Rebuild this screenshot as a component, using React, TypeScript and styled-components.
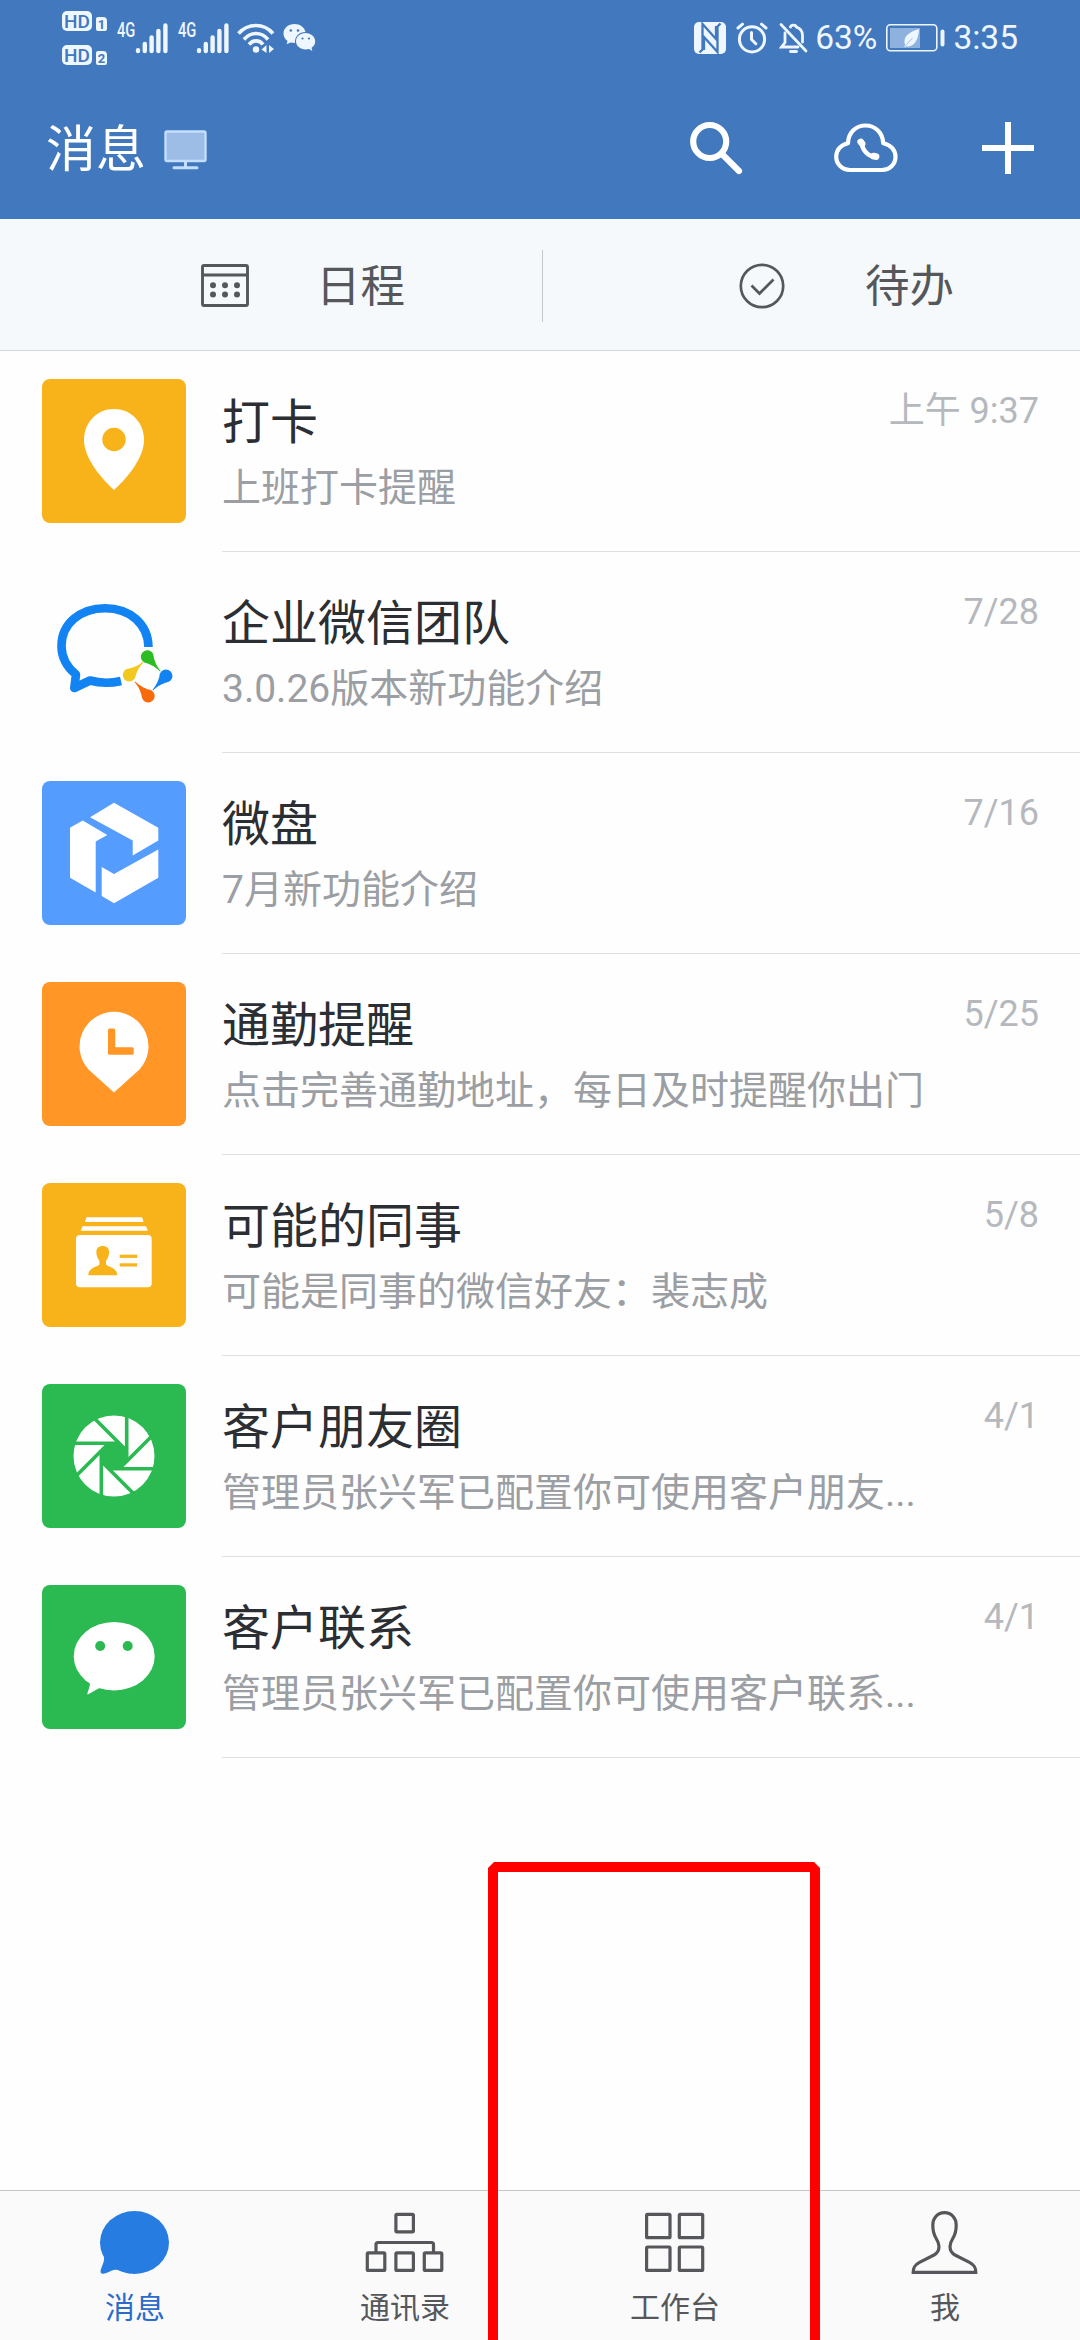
import React from "react";
import styled, { createGlobalStyle } from "styled-components";

const BLUE = "#4278be";
const INK = "#55575b";

const GlobalStyle = createGlobalStyle`
  body {
    margin: 0;
    background: #fff;
    font-family: Roboto, "Noto Sans CJK SC", sans-serif;
  }
  svg { display: block; flex: none; }
`;

const Screen = styled.div`
  position: relative;
  display: flex;
  flex-direction: column;
  width: 1080px;
  height: 2340px;
  overflow: hidden;
  background: #fefefe;
`;

/* ---------- status bar ---------- */

const StatusBar = styled.div`
  display: flex;
  justify-content: space-between;
  height: 76px;
  padding: 0 62px;
  box-sizing: border-box;
  background: ${BLUE};
  color: #eef6ff;
`;

const StatusGroup = styled.div`
  display: flex;
  align-items: center;
`;

const HdColumn = styled.div`
  display: flex;
  flex-direction: column;
  gap: 14px;
`;

const HdLine = styled.div`
  display: flex;
  align-items: flex-end;
  gap: 4px;
  height: 20px;
`;

const HdBadge = styled.span`
  width: 30px;
  height: 20px;
  border-radius: 5px;
  background: #eef6ff;
  color: ${BLUE};
  font-size: 19px;
  font-weight: 500;
  line-height: 21px;
  text-align: center;
`;

const SimBadge = styled.span`
  width: 11px;
  height: 14px;
  border-radius: 2px 4px 2px 2px;
  background: #eef6ff;
  color: ${BLUE};
  font-size: 13px;
  font-weight: 700;
  line-height: 15px;
  text-align: center;
`;

const Signal = styled.div<{ $gap: number }>`
  display: flex;
  align-items: flex-start;
  margin-left: ${(p) => p.$gap}px;
`;

const Generation = styled.span`
  width: 18px;
  font-size: 21px;
  font-weight: 500;
  line-height: 17px;
  transform: scaleX(0.7);
  transform-origin: left;
`;

const StatusIcon = styled.span<{ $gap: number }>`
  margin-left: ${(p) => p.$gap}px;
`;

const StatusText = styled.span<{ $gap: number }>`
  margin-left: ${(p) => p.$gap}px;
  font-size: 33.5px;
  line-height: 40px;
`;

/* ---------- title bar ---------- */

const TitleBar = styled.header`
  display: flex;
  align-items: center;
  justify-content: space-between;
  height: 143px;
  padding: 0 46px 0 46px;
  box-sizing: border-box;
  background: ${BLUE};
  color: #fff;
`;

const TitleGroup = styled.div`
  display: flex;
  align-items: center;
  gap: 18px;
  padding-top: 4px;
`;

const Title = styled.h1`
  margin: 0;
  font-size: 50px;
  font-weight: 400;
  line-height: 60px;
`;

const Actions = styled.div`
  display: flex;
  align-items: center;
  gap: 84px;
`;

const SearchButton = styled.span`
  margin-right: 7px;
`;

/* ---------- shortcuts ---------- */

const Shortcuts = styled.div`
  display: flex;
  align-items: center;
  height: 132px;
  padding-top: 2px;
  box-sizing: border-box;
  border-bottom: 1px solid #d3dade;
  background: #f5f9fc;
  color: ${INK};
`;

const Shortcut = styled.div<{ $pad: number; $gap: number }>`
  display: flex;
  flex: 1;
  align-items: center;
  gap: ${(p) => p.$gap}px;
  padding-left: ${(p) => p.$pad}px;
  font-size: 44.5px;
  line-height: 60px;
`;

const ShortcutLabel = styled.span`
  padding-top: 2px;
`;

const Divider = styled.div`
  width: 1px;
  height: 72px;
  background: #c3c8cc;
`;

/* ---------- conversations ---------- */

const List = styled.main`
  flex: 1;
`;

const Row = styled.article`
  display: flex;
  height: 201px;
  padding-left: 42px;
  box-sizing: border-box;
`;

const Avatar = styled.div<{ $bg: string }>`
  width: 144px;
  height: 144px;
  margin: 28px 36px 0 0;
  flex: none;
  border-radius: 8px;
  background: ${(p) => p.$bg};
`;

const Body = styled.div`
  display: flex;
  flex: 1;
  justify-content: space-between;
  padding: 42px 41px 0 0;
  border-bottom: 1px solid #dfe0e2;
`;

const Texts = styled.div`
  display: flex;
  flex-direction: column;
`;

const Name = styled.h2`
  margin: 0;
  color: #2b2e33;
  font-size: 48px;
  font-weight: 400;
  line-height: 60px;
  white-space: nowrap;
`;

const Preview = styled.p`
  margin: 10px 0 0;
  color: #9b9ea3;
  font-size: 39px;
  font-weight: 400;
  line-height: 50px;
  white-space: nowrap;
`;

const Time = styled.time`
  margin-top: -3px;
  height: 42px;
  color: #b5b8bd;
  font-size: 36px;
  line-height: 42px;
  white-space: nowrap;
`;

/* ---------- bottom navigation ---------- */

const Nav = styled.nav`
  display: flex;
  height: 150px;
  box-sizing: border-box;
  border-top: 1px solid #c6c6c6;
  background: #fafafa;
`;

const NavItem = styled.div<{ $active?: boolean }>`
  display: flex;
  flex: 1;
  flex-direction: column;
  align-items: center;
  padding-top: 18px;
  color: ${(p) => (p.$active ? "#2a6bcb" : INK)};
  font-size: 30px;
  line-height: 40px;
`;

const NavLabel = styled.span`
  margin-top: 13px;
`;

/* Red marker drawn over the workbench tab, running off the bottom edge. */
const Marker = styled.div`
  position: absolute;
  left: 488px;
  top: 1862px;
  width: 332px;
  height: 490px;
  box-sizing: border-box;
  border: 10px solid #ff0000;
  clip-path: polygon(6px 0, 326px 0, 100% 6px, 100% 100%, 0 100%, 0 6px);
`;

/* ---------- icons ---------- */

const SignalBars = () => (
  <svg width="34" height="32" viewBox="0 0 34 32" stroke="currentColor" strokeWidth="4.4" strokeLinecap="round">
    <path d="M3 28.2V29M9.8 22V29M16.6 15.5V29M23.4 9V29M30.4 3.5V29" />
  </svg>
);

const WifiIcon = () => (
  <svg width="38" height="32" viewBox="0 0 38 32" fill="none" stroke="currentColor" strokeWidth="3.6">
    <path d="M1.5 11.5C11 .8 27 .8 36 11.5M7 17.5C13.5 9.5 24.5 9.5 31 17.5M12 22.5C16 17.6 22.4 17.6 26 22.5" />
    <circle cx="19" cy="27.5" r="3.2" fill="currentColor" stroke="none" />
    <path d="M29.5 23V31L24.5 27.5ZM32 23V31L37 27Z" fill="currentColor" stroke="none" />
  </svg>
);

const WechatStatusIcon = () => (
  <svg width="33" height="30" viewBox="0 0 33 30" fill="currentColor">
    <path d="M11.5 1C5.200 1 .5 5.200 .5 10.500C.5 13.600 2 16 4.500 17.900L3.600 21.300L7.500 19.400L12 20.100C11.500 13.500 16 9 22.500 9C21.500 4.300 17 1 11.500 1Z" />
    <path d="M22.500 10C17 10 13 13.800 13 18.300C13 23 17.300 26.500 22.500 26.500L26 26L29.300 28L28.600 24.800C31 23.200 32.200 21 32.200 18.300C32.200 13.800 28 10 22.500 10Z" />
    <g fill={BLUE}>
      <circle cx="7.800" cy="7.500" r="1.300" />
      <circle cx="15" cy="7.500" r="1.300" />
      <circle cx="19.500" cy="15.500" r="1.100" />
      <circle cx="26" cy="15.500" r="1.100" />
    </g>
  </svg>
);

const NfcIcon = () => (
  <svg width="32" height="32" viewBox="0 0 32 32">
    <rect width="32" height="32" rx="5" fill="currentColor" />
    <path
      d="M5.500 30.500L8.500 27.500V2L22 17V4M26.500 1.500L23.500 4.500V30L10 15V28"
      fill="none"
      stroke={BLUE}
      strokeWidth="2.300"
    />
  </svg>
);

const AlarmIcon = () => (
  <svg width="32" height="32" viewBox="0 0 32 32" fill="none" stroke="currentColor" strokeWidth="3" strokeLinecap="round">
    <circle cx="16" cy="17.300" r="12.600" />
    <path d="M2 6L6.500 2.200M25.500 2.200L30 6M15.500 10.500V17.500L19.800 21.800" />
  </svg>
);

const BellOffIcon = () => (
  <svg width="29" height="32" viewBox="0 0 29 32" fill="none" stroke="currentColor" strokeWidth="2.800" strokeLinecap="round">
    <path d="M2 2.500L27 29" />
    <path d="M11.500 5C12.200 2.500 16.800 2.500 17.500 5.200C21.500 6.500 23.500 9.500 23.500 13.500V20M6 11V20.500L2.500 25H19" />
    <path d="M11.500 29.500H17.500" />
  </svg>
);

const BatteryIcon = () => (
  <svg width="59" height="28" viewBox="0 0 59 28">
    <rect x=".8" y=".8" width="50" height="26" rx="3.500" fill="none" stroke="currentColor" strokeWidth="1.600" />
    <rect x="4" y="4" width="30" height="20" fill="#8fb1de" />
    <rect x="54.500" y="5.500" width="4" height="17" rx="2" fill="currentColor" />
    <path d="M33 5C25 7.500 19 11 18.500 16.500C18.400 18.500 18.800 20 19.200 21L18 23.500L20 22.300C27 23.500 32.500 17.500 33 5Z" fill="currentColor" />
    <path d="M19.500 21.500L26.500 14" stroke="#8fb1de" strokeWidth=".8" />
  </svg>
);

const MonitorIcon = () => (
  <svg width="43" height="40" viewBox="0 0 43 40" fill="none" stroke="#c3deff">
    <rect x="1.500" y="1.500" width="40" height="29.500" rx="1.500" fill="#9dbce6" strokeWidth="2.400" />
    <path d="M21.500 31V37M10 37.700H33" strokeWidth="3" strokeLinecap="round" />
  </svg>
);

const SearchIcon = () => (
  <svg width="54" height="54" viewBox="0 0 54 54" fill="none" stroke="currentColor">
    <circle cx="20.700" cy="20.500" r="16.500" strokeWidth="6.200" />
    <path d="M33 33L50 50" strokeWidth="6.200" strokeLinecap="round" />
  </svg>
);

const CloudCallIcon = () => (
  <svg width="64" height="50" viewBox="0 0 64 50" fill="none" stroke="currentColor" strokeWidth="4.200">
    <path d="M16 47C8 47 2.200 41 2.200 33.800C2.200 27 7 21.500 14 20.200C14.200 10 21.500 2.500 31.500 2.500C41.500 2.500 48.800 10 49.200 20.200C56.500 21.500 61.500 27 61.500 33.800C61.500 41 56 47 48 47Z" strokeLinejoin="round" />
    <path d="M27.500 18C28 27 33.500 33.500 43 34.500" strokeWidth="4.600" />
    <path d="M26.800 19L28 20.500M39.800 33.200L42 33.500" strokeWidth="6.800" strokeLinecap="round" />
  </svg>
);

const PlusIcon = () => (
  <svg width="52" height="52" viewBox="0 0 52 52" stroke="currentColor" strokeWidth="6">
    <path d="M26 0V52M0 26H52" />
  </svg>
);

const CalendarIcon = () => (
  <svg width="48" height="43" viewBox="0 0 48 43" fill="none" stroke="currentColor">
    <rect x="1.500" y="1.500" width="45" height="40" rx="1.500" strokeWidth="2.900" />
    <path d="M1.500 11H46.500" strokeWidth="2.900" />
    <g fill="currentColor" stroke="none">
      {[12, 24, 36].map((x) => (
        <React.Fragment key={x}>
          <circle cx={x} cy="21.300" r="3" />
          <circle cx={x} cy="30.500" r="3" />
        </React.Fragment>
      ))}
    </g>
  </svg>
);

const CheckCircleIcon = () => (
  <svg width="46" height="46" viewBox="0 0 46 46" fill="none" stroke="currentColor" strokeWidth="2.700">
    <circle cx="23" cy="23" r="21.200" />
    <path d="M12.500 22.500L20.500 30.500L34.500 16.500" />
  </svg>
);

const PinArt = () => (
  <svg width="144" height="144" viewBox="0 0 144 144">
    <path d="M72 30C88.500 30 102 43 102 61C102 80 83 101 72 111C61 101 42 80 42 61C42 43 55.500 30 72 30Z" fill="#fff" />
    <circle cx="72" cy="60.500" r="11.700" fill="#f8b31b" />
  </svg>
);

const drops = [
  { x: 105.3, y: 76.7, turn: 48, fill: "#2dbc24" },
  { x: 87.3, y: 95, turn: -43, fill: "#f2c81e" },
  { x: 124, y: 96, turn: 133, fill: "#1283f2" },
  { x: 106.2, y: 116, turn: -133, fill: "#f96a0b" },
];

const WecomArt = () => (
  <svg width="144" height="144" viewBox="0 0 144 144">
    <path
      d="M106.500 67C106 44 88 28.200 63 28.200C38 28.200 19.500 44 19.500 66C19.500 79 26 88 34 94.500L32.300 108L48 100.500C58 103.300 69 103.300 79 101"
      fill="none"
      stroke="#1283f2"
      strokeWidth="8.600"
      strokeLinejoin="round"
    />
    {drops.map((d) => (
      <path
        key={d.fill}
        transform={`translate(${d.x} ${d.y}) rotate(${d.turn})`}
        d="M19.500 0.300C12 1 8.500 2.500 4.500 4.700A6.500 6.500 0 1 1 4.500-4.700C8.500-2.500 12-1 19.500-0.300Z"
        fill={d.fill}
      />
    ))}
  </svg>
);

const DriveArt = () => (
  <svg width="144" height="144" viewBox="0 0 144 144" fill="#fff">
    <path d="M72 21.700L116.300 46.700V59.500L90.700 74.500V59.500L48 36.300Z" />
    <path d="M40.700 39.500L65.300 54L53.700 60.500V111.500L28 96.700V46.700Z" />
    <path d="M59.700 86L72 93L116.300 68.500V96.700L72 122.300L59.700 115Z" />
  </svg>
);

const CommuteArt = () => (
  <svg width="144" height="144" viewBox="0 0 144 144">
    <path d="M72 29.800A34.500 34.500 0 0 1 97.500 87.500L72 110.500L46.500 87.500A34.500 34.500 0 0 1 72 29.800Z" fill="#fff" />
    <path d="M66 48A1.500 1.500 0 0 1 67.500 46.500H71.700A1.500 1.500 0 0 1 73.200 48V65.300H90.200A1.500 1.500 0 0 1 91.700 66.800V71.200A1.500 1.500 0 0 1 90.200 72.700H67.500A1.500 1.500 0 0 1 66 71.200Z" fill="#ff9626" />
  </svg>
);

const ColleaguesArt = () => (
  <svg width="144" height="144" viewBox="0 0 144 144">
    <g fill="#fff">
      <path d="M44.500 34.300H100L101.500 39H43Z" />
      <path d="M40.500 43.300H104L105.800 47.800H38.700Z" />
      <rect x="34" y="52" width="75.700" height="52.300" rx="4" />
    </g>
    <g fill="#f8b31b">
      <path d="M60.700 63C65 63 67.300 65.500 67 70C66.800 74 65.500 75.500 64 78V81.500C66 84 75.300 84.500 75.300 92.300H46.300C46.300 84.500 55.400 84 57.400 81.500V78C56 75.500 54.600 74 54.400 70C54.100 65.500 56.500 63 60.700 63Z" />
      <rect x="77.700" y="71.700" width="17.500" height="3.200" />
      <rect x="77.700" y="80.300" width="17.500" height="3.200" />
    </g>
  </svg>
);

const ShutterArt = () => (
  <svg width="144" height="144" viewBox="0 0 144 144">
    <g transform="translate(72 72)">
      <circle r="40.500" fill="#fff" />
      <path d="M12.700-5.300V5.300L5.300 12.700H-5.300L-12.700 5.300V-5.300L-5.300-12.700H5.300Z" fill="#2bb952" />
      {[0, 45, 90, 135, 180, 225, 270, 315].map((a) => (
        <path key={a} transform={`rotate(${a})`} d="M12.700 5.300V-42" stroke="#2bb952" strokeWidth="3.600" />
      ))}
    </g>
  </svg>
);

const WechatArt = () => (
  <svg width="144" height="144" viewBox="0 0 144 144">
    <ellipse cx="72.200" cy="71.200" rx="40.500" ry="34.200" fill="#fff" />
    <path d="M46 94C49.500 98 47.500 102 45.300 108.500C45 109.500 46 109.500 46.800 109L56.500 103.500C58 102.700 60 103.500 64 104.500L60 90Z" fill="#fff" />
    <circle cx="58.200" cy="61" r="5" fill="#2bb952" />
    <circle cx="85.700" cy="61" r="5" fill="#2bb952" />
  </svg>
);

const ChatTab = () => (
  <svg width="80" height="66" viewBox="0 0 80 66" fill="#267ce0">
    <ellipse cx="39.500" cy="33.500" rx="34.500" ry="31.500" />
    <path d="M8 45C10.500 50 8.500 53 6 60C4.700 63.500 6 65.500 9.500 64.500C15 63 17.500 60 22.500 60.800C27 61.800 30 64 36 64.500L30 40Z" />
  </svg>
);

const ContactsTab = () => (
  <svg width="80" height="66" viewBox="0 0 80 66" fill="none" stroke="currentColor" strokeWidth="3.200">
    <rect x="30.900" y="5.300" width="17.500" height="17.500" rx="1" />
    <rect x="2.300" y="43.900" width="17.500" height="17.500" rx="1" />
    <rect x="30.900" y="43.900" width="17.500" height="17.500" rx="1" />
    <rect x="59.300" y="43.900" width="17.500" height="17.500" rx="1" />
    <path d="M11 43.500V35.500Q11 33.500 13 33.500H66.500Q68.500 33.500 68.500 35.500V43.500" />
  </svg>
);

const WorkbenchTab = () => (
  <svg width="80" height="66" viewBox="0 0 80 66" fill="none" stroke="currentColor" strokeWidth="3.200">
    <rect x="11.600" y="5.300" width="23.400" height="23.400" rx="1" />
    <rect x="44.300" y="5.300" width="23.400" height="23.400" rx="1" />
    <rect x="11.600" y="38" width="23.400" height="23.400" rx="1" />
    <rect x="44.300" y="38" width="23.400" height="23.400" rx="1" />
  </svg>
);

const MeTab = () => (
  <svg width="80" height="66" viewBox="0 0 80 66" fill="none" stroke="currentColor" strokeWidth="3.200">
    <path d="M39.500 3.700C46.500 3.700 51.200 9 51.200 16C51.200 22.500 50.300 25.500 47.800 29.500C45.800 32.700 45 34.500 45 37.500C45 41.500 46.500 44 50 46L64.500 53.300C69 55.700 70.800 58 70.800 63.300H8.200C8.200 58 10 55.700 14.500 53.300L29 46C32.500 44 34 41.500 34 37.500C34 34.500 33.200 32.700 31.200 29.500C28.700 25.500 27.800 22.500 27.800 16C27.800 9 32.500 3.700 39.500 3.700Z" />
  </svg>
);

const conversations = [
  { name: "打卡", preview: "上班打卡提醒", time: "上午 9:37", bg: "#f8b31b", Art: PinArt },
  { name: "企业微信团队", preview: "3.0.26版本新功能介绍", time: "7/28", bg: "transparent", Art: WecomArt },
  { name: "微盘", preview: "7月新功能介绍", time: "7/16", bg: "#549dff", Art: DriveArt },
  { name: "通勤提醒", preview: "点击完善通勤地址，每日及时提醒你出门", time: "5/25", bg: "#ff9626", Art: CommuteArt },
  { name: "可能的同事", preview: "可能是同事的微信好友：裴志成", time: "5/8", bg: "#f8b31b", Art: ColleaguesArt },
  { name: "客户朋友圈", preview: "管理员张兴军已配置你可使用客户朋友...", time: "4/1", bg: "#2bb952", Art: ShutterArt },
  { name: "客户联系", preview: "管理员张兴军已配置你可使用客户联系...", time: "4/1", bg: "#2bb952", Art: WechatArt },
];

const tabs = [
  { label: "消息", Icon: ChatTab, active: true },
  { label: "通讯录", Icon: ContactsTab },
  { label: "工作台", Icon: WorkbenchTab },
  { label: "我", Icon: MeTab },
];

export default function App() {
  return (
    <>
      <GlobalStyle />
      <Screen>
        <StatusBar>
          <StatusGroup>
            <HdColumn>
              {["1", "2"].map((sim) => (
                <HdLine key={sim}>
                  <HdBadge>HD</HdBadge>
                  <SimBadge>{sim}</SimBadge>
                </HdLine>
              ))}
            </HdColumn>
            <Signal $gap={10}>
              <Generation>4G</Generation>
              <SignalBars />
            </Signal>
            <Signal $gap={9}>
              <Generation>4G</Generation>
              <SignalBars />
            </Signal>
            <StatusIcon $gap={7}><WifiIcon /></StatusIcon>
            <StatusIcon $gap={8}><WechatStatusIcon /></StatusIcon>
          </StatusGroup>
          <StatusGroup>
            <StatusIcon $gap={0}><NfcIcon /></StatusIcon>
            <StatusIcon $gap={10}><AlarmIcon /></StatusIcon>
            <StatusIcon $gap={11}><BellOffIcon /></StatusIcon>
            <StatusText $gap={7}>63%</StatusText>
            <StatusIcon $gap={9}><BatteryIcon /></StatusIcon>
            <StatusText $gap={8}>3:35</StatusText>
          </StatusGroup>
        </StatusBar>

        <TitleBar>
          <TitleGroup>
            <Title>消息</Title>
            <MonitorIcon />
          </TitleGroup>
          <Actions>
            <SearchButton><SearchIcon /></SearchButton>
            <CloudCallIcon />
            <PlusIcon />
          </Actions>
        </TitleBar>

        <Shortcuts>
          <Shortcut $pad={201} $gap={67}>
            <CalendarIcon />
            <ShortcutLabel>日程</ShortcutLabel>
          </Shortcut>
          <Divider />
          <Shortcut $pad={196} $gap={80}>
            <CheckCircleIcon />
            <ShortcutLabel>待办</ShortcutLabel>
          </Shortcut>
        </Shortcuts>

        <List>
          {conversations.map(({ name, preview, time, bg, Art }) => (
            <Row key={name}>
              <Avatar $bg={bg}><Art /></Avatar>
              <Body>
                <Texts>
                  <Name>{name}</Name>
                  <Preview>{preview}</Preview>
                </Texts>
                <Time>{time}</Time>
              </Body>
            </Row>
          ))}
        </List>

        <Nav>
          {tabs.map(({ label, Icon, active }) => (
            <NavItem key={label} $active={active}>
              <Icon />
              <NavLabel>{label}</NavLabel>
            </NavItem>
          ))}
        </Nav>

        <Marker />
      </Screen>
    </>
  );
}
